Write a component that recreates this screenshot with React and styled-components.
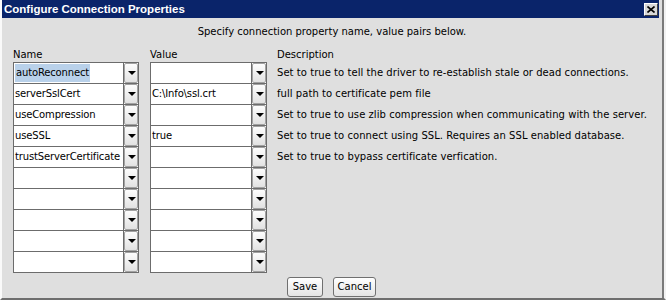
import React from "react";
import styled, { createGlobalStyle } from "styled-components";

const GlobalStyle = createGlobalStyle`
    html, body {
        margin: 0;
        padding: 0;
        background: #dfdfdf;
    }
    * {
        box-sizing: border-box;
    }
`;

const rows = [
    { name: "autoReconnect", value: "", desc: "Set to true to tell the driver to re-establish stale or dead connections.", selected: true },
    { name: "serverSslCert", value: "C:\\Info\\ssl.crt", desc: "full path to certificate pem file" },
    { name: "useCompression", value: "", desc: "Set to true to use zlib compression when communicating with the server." },
    { name: "useSSL", value: "true", desc: "Set to true to connect using SSL. Requires an SSL enabled database." },
    { name: "trustServerCertificate", value: "", desc: "Set to true to bypass certificate verfication." },
    { name: "", value: "", desc: "" },
    { name: "", value: "", desc: "" },
    { name: "", value: "", desc: "" },
    { name: "", value: "", desc: "" },
    { name: "", value: "", desc: "" },
];

const Combo = ({ text, selected, last }) => (
    <ComboBox $last={last}>
        <Campo>{selected ? <Seleccion>{text}</Seleccion> : text}</Campo>
        <Flecha>
            <Triangulo />
        </Flecha>
    </ComboBox>
);

const App = () => {
    return (
        <>
            <GlobalStyle />
            <Ventana>
                <Marco>
                    <BarraTitulo>
                        <Titulo>Configure Connection Properties</Titulo>
                        <BotonCerrar>
                            <svg width="8" height="7" viewBox="0 0 8 7">
                                <path d="M0.5 0.5 L7.5 6.5 M7.5 0.5 L0.5 6.5" stroke="#000" strokeWidth="1.6" />
                            </svg>
                        </BotonCerrar>
                    </BarraTitulo>
                    <Subtitulo>Specify connection property name, value pairs below.</Subtitulo>
                    <Tabla>
                        <Encabezado>Name</Encabezado>
                        <Encabezado>Value</Encabezado>
                        <Encabezado>Description</Encabezado>
                        {rows.map((r, i) => (
                            <React.Fragment key={i}>
                                <Combo text={r.name} selected={r.selected} last={i === rows.length - 1} />
                                <Combo text={r.value} last={i === rows.length - 1} />
                                <Descripcion>{r.desc}</Descripcion>
                            </React.Fragment>
                        ))}
                    </Tabla>
                    <Botonera>
                        <Boton $w={36}>Save</Boton>
                        <Boton $w={43}>Cancel</Boton>
                    </Botonera>
                </Marco>
            </Ventana>
        </>
    );
};

export default App;

const Ventana = styled.div`
    width: 666px;
    height: 300px;
    background: #dfdfdf;
    border-left: 2px solid #fafafa;
    border-right: 2px solid #f2f2f2;
    border-bottom: 2px solid #6e6e6e;
    font-family: "DejaVu Sans", Verdana, sans-serif;
    font-size: 10px;
    color: #000;
    overflow: hidden;
`;

const Marco = styled.div`
    height: 100%;
    border-right: 2px solid #7a7a7a;
    display: flex;
    flex-direction: column;
`;

const BarraTitulo = styled.div`
    height: 18px;
    margin-right: 3px;
    background: #0a246a;
    display: flex;
    align-items: center;
    justify-content: space-between;
    padding: 0 1px 0 2px;
`;

const Titulo = styled.span`
    color: #fff;
    font-family: "Liberation Sans", Arial, sans-serif;
    font-weight: bold;
    font-size: 11.5px;
    line-height: 18px;
`;

const BotonCerrar = styled.div`
    width: 14px;
    height: 13px;
    background: #d8d8d8;
    border-top: 1px solid #fff;
    border-left: 1px solid #fff;
    border-right: 1px solid #404040;
    border-bottom: 1px solid #404040;
    display: flex;
    align-items: center;
    justify-content: center;
`;

const Subtitulo = styled.div`
    text-align: center;
    line-height: 14px;
    padding-top: 7px;
    margin-bottom: 9px;
`;

const Tabla = styled.div`
    display: grid;
    grid-template-columns: 126px 117px 1fr;
    column-gap: 11px;
    padding-left: 11px;

    & > :nth-child(3n) {
        margin-left: -1px;
    }
`;

const Encabezado = styled.div`
    line-height: 14px;
    height: 14px;
`;

const ComboBox = styled.div`
    display: flex;
    height: ${(p) => (p.$last ? "22px" : "21px")};
    background: #fff;
    border: 1px solid #6c6c6c;
    border-bottom: ${(p) => (p.$last ? "1px solid #6c6c6c" : "none")};
`;

const Campo = styled.div`
    flex: 1;
    line-height: 19px;
    padding-left: 1px;
    letter-spacing: -0.15px;
    white-space: nowrap;
    overflow: hidden;
    border-right: 1px solid #6c6c6c;
`;

const Seleccion = styled.span`
    display: inline-block;
    background: #b9d1ea;
    padding: 0 1px;
    line-height: 18px;
`;

const Flecha = styled.div`
    width: 14px;
    border: 1px solid #a2a2a2;
    border-radius: 2px;
    background: linear-gradient(#fdfdfd, #e2e2e2);
    display: flex;
    align-items: center;
    justify-content: center;
`;

const Triangulo = styled.div`
    width: 0;
    height: 0;
    border-left: 4px solid transparent;
    border-right: 4px solid transparent;
    border-top: 4px solid #000;
    margin-left: 1px;
`;

const Descripcion = styled.div`
    line-height: 21px;
    white-space: nowrap;
    letter-spacing: 0.05px;
`;

const Botonera = styled.div`
    display: flex;
    justify-content: center;
    gap: 10px;
    margin-top: 4px;
    padding-right: 1px;
`;

const Boton = styled.div`
    width: ${(p) => p.$w}px;
    height: 20px;
    border: 1px solid #707070;
    border-radius: 3px;
    background: linear-gradient(#ffffff, #e4e4e4);
    line-height: 18px;
    text-align: center;
`;
